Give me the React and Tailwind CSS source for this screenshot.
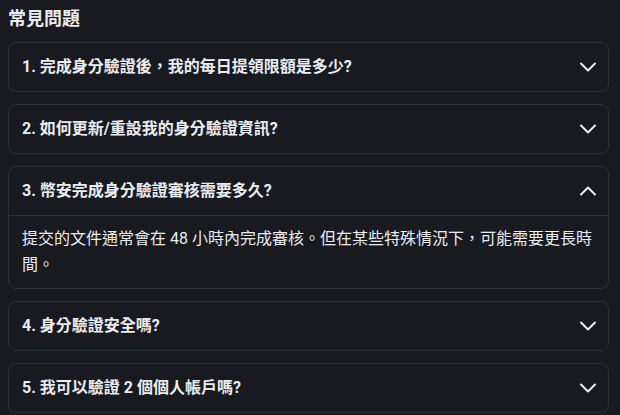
import { useState } from 'react';

const faqs = [
  { q: '1. 完成身分驗證後，我的每日提領限額是多少?', a: '' },
  { q: '2. 如何更新/重設我的身分驗證資訊?', a: '' },
  {
    q: '3. 幣安完成身分驗證審核需要多久?',
    a: '提交的文件通常會在 48 小時內完成審核。但在某些特殊情況下，可能需要更長時間。',
  },
  { q: '4. 身分驗證安全嗎?', a: '' },
  { q: '5. 我可以驗證 2 個個人帳戶嗎?', a: '' },
];

function Chevron({ up }) {
  return (
    <svg width="16" height="16" viewBox="0 0 16 16" fill="none" className="shrink-0">
      <path
        d={up ? 'M1 11.5 8 4.5l7 7' : 'M1 4.5 8 11.5l7-7'}
        stroke="#eaecef"
        strokeWidth="2"
        strokeLinecap="round"
        strokeLinejoin="round"
      />
    </svg>
  );
}

export default function App() {
  const [open, setOpen] = useState(2);

  return (
    <div
      className="min-h-[415px] w-[620px] bg-[#181a20] pl-2 pt-[5px] text-[#eaecef]"
      style={{ fontFamily: 'Roboto, "Noto Sans CJK TC", sans-serif' }}
    >
      <h2 className="mb-[9px] text-[18px] font-bold leading-7">常見問題</h2>
      <div className="flex w-[601px] flex-col gap-3">
        {faqs.map((item, i) => (
          <div key={i} className="rounded-lg border border-[#2b3139]">
            <button
              type="button"
              onClick={() => setOpen(open === i ? -1 : i)}
              className="flex h-12 w-full items-center justify-between pl-[13px] pr-[12px] text-left"
            >
              <span className="text-[16px] font-bold">{item.q}</span>
              <Chevron up={open === i} />
            </button>
            {open === i && item.a && (
              <div className="border-t border-[#2b3139] py-[10px] pl-[13px] pr-[8px] text-[16px] leading-[26px]">
                {item.a}
              </div>
            )}
          </div>
        ))}
      </div>
    </div>
  );
}
